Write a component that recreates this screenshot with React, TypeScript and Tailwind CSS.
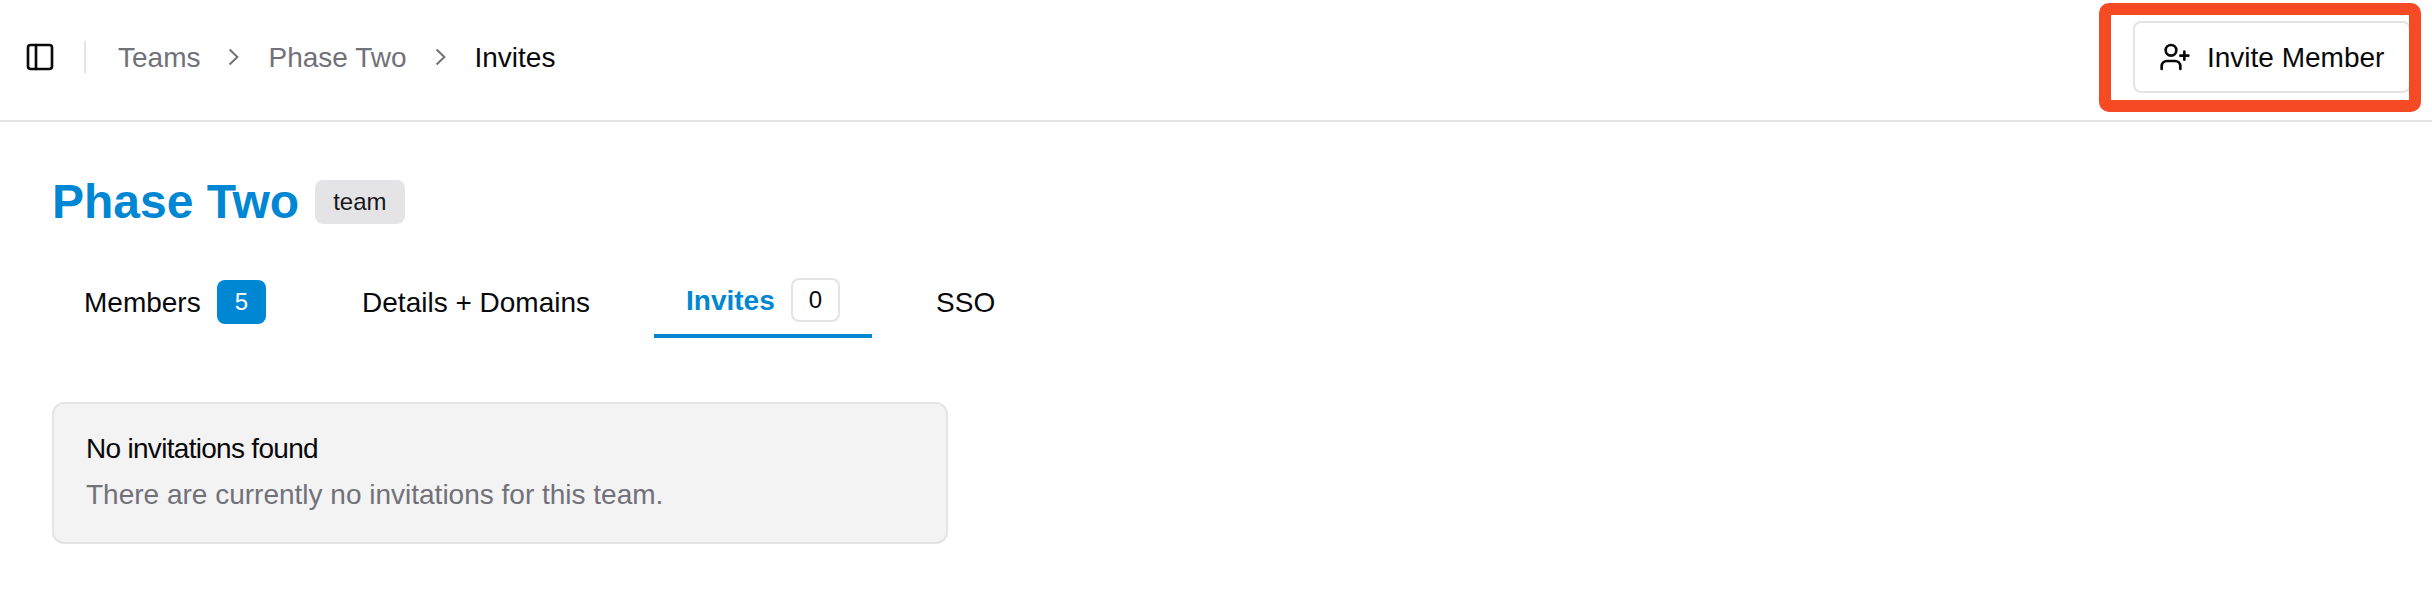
import type { ReactNode } from "react";
import { PanelLeft } from "lucide-react";

function InvitePersonIcon() {
  return (
    <svg viewBox="0 0 24 24" className="size-8 shrink-0" fill="none" stroke="currentColor" strokeWidth="2" strokeLinecap="round" strokeLinejoin="round">
      <path d="M16 21v-2a4 4 0 0 0-4-4H6a4 4 0 0 0-4 4v2" />
      <circle cx="9" cy="7" r="4" />
      <path d="M19 8v6" />
      <path d="M22 11h-6" />
    </svg>
  );
}

function Crumb({ children, current = false }: { children: ReactNode; current?: boolean }) {
  return <span className={current ? "pt-0.5 text-[#09090b]" : "pt-0.5"}>{children}</span>;
}

function CrumbSeparator() {
  return (
    <svg viewBox="0 0 28 28" className="size-7 shrink-0" fill="none" stroke="currentColor" strokeWidth="2">
      <path d="M9.6 6.6 17.4 14l-7.8 7.4" />
    </svg>
  );
}

function Tab({ label, badge, active = false }: { label: string; badge?: ReactNode; active?: boolean }) {
  return (
    <a
      className={
        active
          ? "flex h-[76px] items-center gap-4 border-b-4 border-[#0087d4] px-8 pt-1 font-bold text-[#0087d4]"
          : "flex h-[76px] items-center gap-4 px-8 pt-1"
      }
    >
      <span className="pt-0.5">{label}</span>
      {badge}
    </a>
  );
}

export default function App() {
  return (
    <div className="min-h-[606px] w-full bg-white font-['Liberation_Sans',Arial,sans-serif] text-[28px] leading-10 text-[#09090b]">
      <header className="flex h-[122px] items-start justify-between border-b-2 border-[#e4e4e4] pt-[3px] pr-[11px] pl-6">
        <div className="flex h-[108px] items-center">
          <PanelLeft className="size-8" />
          <div className="mr-8 ml-7 h-8 w-0.5 bg-[#e4e4e4]" />
          <nav className="flex items-center gap-5 text-[#71717a]">
            <Crumb>Teams</Crumb>
            <CrumbSeparator />
            <Crumb>Phase Two</Crumb>
            <CrumbSeparator />
            <Crumb current>Invites</Crumb>
          </nav>
        </div>
        <div className="relative flex h-[109px] w-[322px] items-start pt-[18px] pl-[34px]">
          <button className="flex h-[72px] w-[278px] items-center gap-4 rounded-lg border-2 border-[#e4e4e4] bg-white pl-6 whitespace-nowrap">
            <InvitePersonIcon />
            <span className="pt-0.5">Invite Member</span>
          </button>
          <div className="absolute inset-0 rounded-[10px] border-12 border-[#f64a25]" />
        </div>
      </header>

      <main className="px-[52px] pt-14">
        <div className="flex items-center gap-4">
          <h1 className="text-5xl leading-[48px] font-bold text-[#0087d4]">Phase Two</h1>
          <span className="flex h-11 items-center rounded-lg bg-[#e4e4e7] px-[18px] text-2xl text-[#18181b]">team</span>
        </div>

        <nav className="mt-9 flex items-start gap-8">
          <Tab
            label="Members"
            badge={<span className="flex h-11 items-center rounded-lg bg-[#0087d4] px-[18px] text-2xl text-white">5</span>}
          />
          <Tab label="Details + Domains" />
          <Tab
            active
            label="Invites"
            badge={
              <span className="flex h-11 items-center rounded-lg border-2 border-[#e4e4e4] px-4 text-2xl font-normal text-[#09090b]">
                0
              </span>
            }
          />
          <Tab label="SSO" />
        </nav>

        <section className="mt-16 h-[142px] w-[896px] rounded-xl border-2 border-[#e4e4e4] bg-[#f3f3f3] px-8 pt-[31px]">
          <h2 className="leading-7 tracking-tight">No invitations found</h2>
          <p className="mt-3 text-[#71717a]">There are currently no invitations for this team.</p>
        </section>
      </main>
    </div>
  );
}
